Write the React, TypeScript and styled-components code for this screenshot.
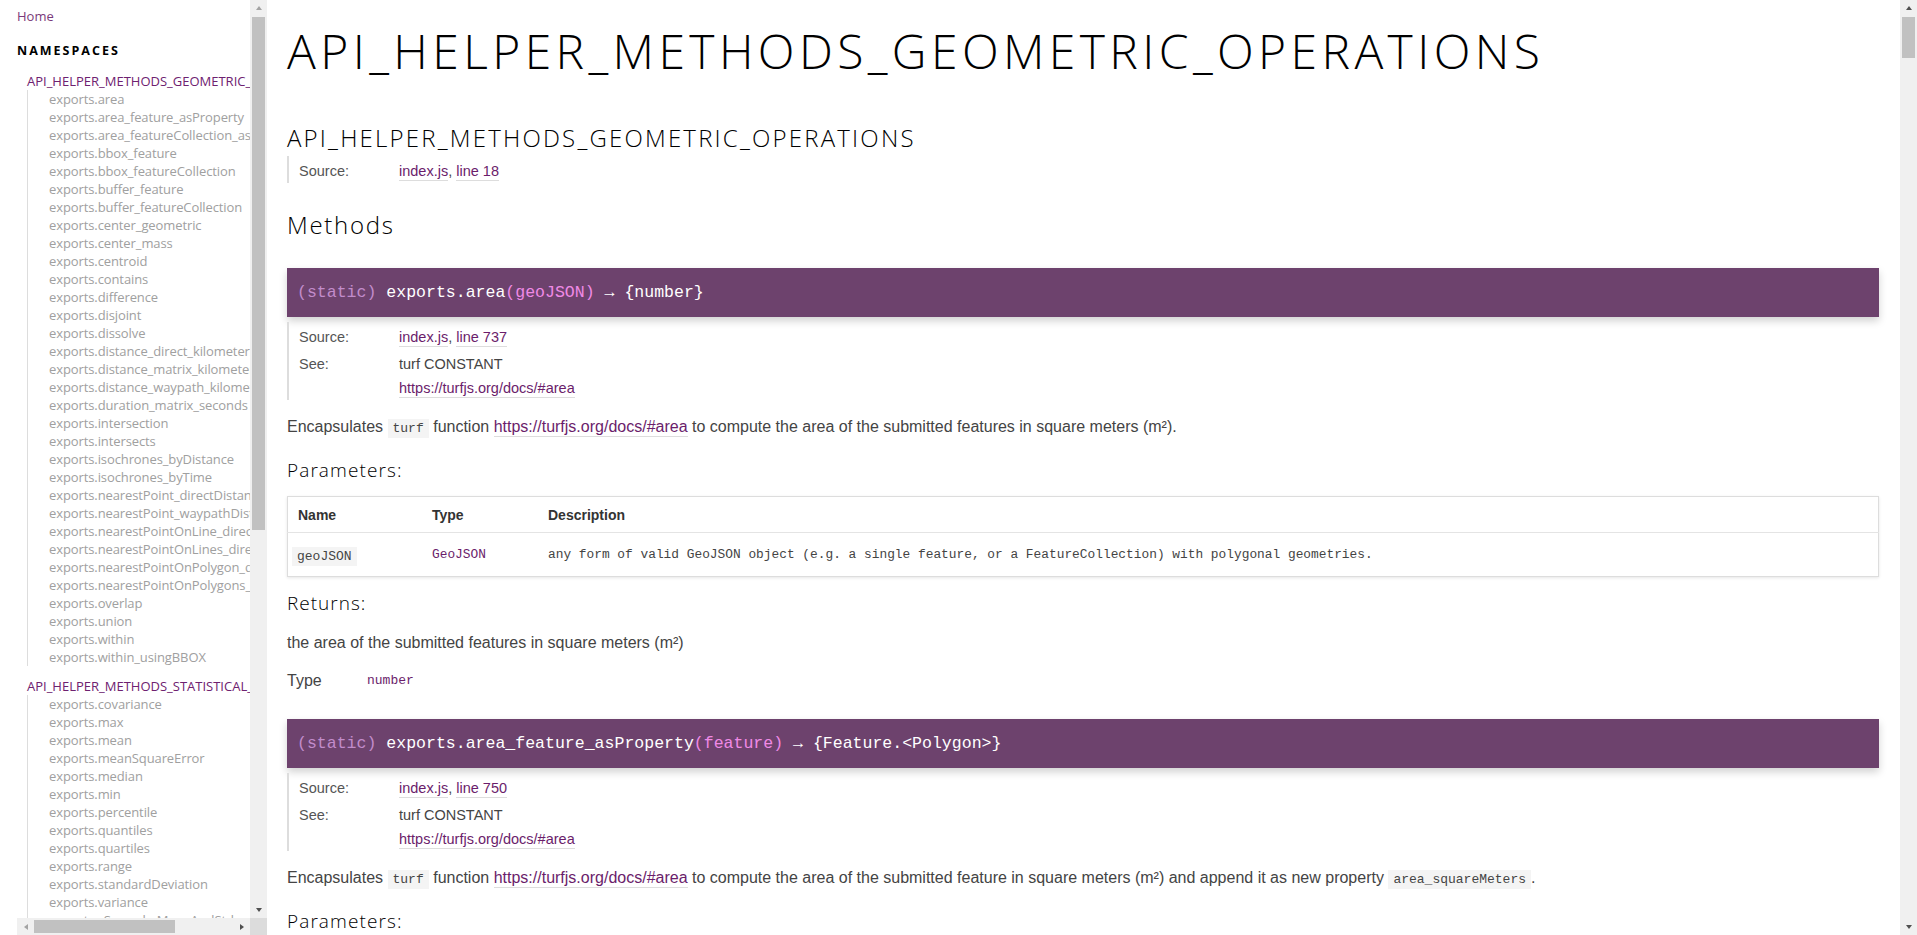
import * as React from 'react';
import styled, { createGlobalStyle, css } from 'styled-components';

const heading = `'Open Sans', 'Noto Sans', sans-serif`;
const body = `'Liberation Sans Narrow', 'Liberation Sans', Arial, sans-serif`;
const mono = `'Liberation Mono', 'DejaVu Sans Mono', monospace`;

const GlobalStyle = createGlobalStyle`
  html, body { margin: 0; padding: 0; background: #fff; }
  body { font-family: ${body}; color: #444; }
`;

/* page frame: left gutter, sidebar with its own scrollbars, content, page scrollbar */
const Shell = styled.div`
  display: flex;
  height: 100vh;
  overflow: hidden;
`;

const SideFrame = styled.div`
  flex: 0 0 250px;
  margin-left: 17px;
  display: grid;
  grid-template-columns: 233px 17px;
  grid-template-rows: 1fr 17px;
  height: 100vh;
`;

const NavViewport = styled.nav`
  overflow: hidden;
  font-family: ${heading};
  font-size: 13px;
`;

/* scrollbars */
const VBar = styled.div<{ $full?: boolean }>`
  display: flex;
  flex-direction: column;
  background: #f0f0f0;
  ${p => p.$full && css`flex: 0 0 17px; height: 100vh;`}
`;

const HBar = styled.div`
  display: flex;
  background: #f0f0f0;
`;

const Corner = styled.div`
  background: #dcdcdc;
`;

const ScrollButton = styled.div`
  flex: 0 0 17px;
  height: 17px;
  display: flex;
  align-items: center;
  justify-content: center;
`;

const Track = styled.div<{ $dir: 'v' | 'h' }>`
  flex: 1;
  display: flex;
  flex-direction: ${p => (p.$dir === 'v' ? 'column' : 'row')};
  padding: ${p => (p.$dir === 'v' ? '0 2px' : '2px 0')};
`;

const Thumb = styled.div<{ $size: number; $dir: 'v' | 'h' }>`
  background: #c1c1c1;
  ${p => (p.$dir === 'v' ? css`height: ${p.$size}px;` : css`width: ${p.$size}px;`)}
`;

const Arrow = styled.span<{ $dir: 'up' | 'down' | 'left' | 'right'; $dim?: boolean }>`
  width: 0;
  height: 0;
  ${p => {
    const c = p.$dim ? '#a3a3a3' : '#505050';
    switch (p.$dir) {
      case 'up':
        return css`border-left: 3.5px solid transparent; border-right: 3.5px solid transparent; border-bottom: 4px solid ${c}; margin-top: -2px;`;
      case 'down':
        return css`border-left: 3.5px solid transparent; border-right: 3.5px solid transparent; border-top: 4px solid ${c};`;
      case 'left':
        return css`border-top: 3.5px solid transparent; border-bottom: 3.5px solid transparent; border-right: 4px solid ${c};`;
      default:
        return css`border-top: 3.5px solid transparent; border-bottom: 3.5px solid transparent; border-left: 4px solid ${c};`;
    }
  }}
`;

/* sidebar */
const NavInner = styled.div`
  width: 330px;
  padding-top: 7px;
`;

const NavHome = styled.a`
  display: block;
  color: #7a3a7a;
  line-height: 18px;
  text-decoration: none;
`;

const NavTitle = styled.h3`
  margin: 17px 0 13px;
  font-size: 12.5px;
  font-weight: 700;
  letter-spacing: 2px;
  color: #000;
  line-height: 18px;
`;

const Namespace = styled.div`
  margin: 0 0 12px 10px;
`;

const NamespaceName = styled.a`
  display: block;
  color: #6e2170;
  line-height: 17px;
  white-space: nowrap;
`;

const MemberList = styled.ul`
  list-style: none;
  margin: 0;
  padding: 0 0 0 21px;
  border-left: 1px solid #ddd;
`;

const Member = styled.li`
  color: #a0a0a0;
  line-height: 18px;
  white-space: nowrap;
  letter-spacing: -0.1px;
`;

/* content */
const Main = styled.main`
  flex: 1;
  min-width: 0;
  height: 100vh;
  overflow: hidden;
  padding: 0 21px 0 20px;
`;

const PageTitle = styled.h1`
  margin: 22px 0 0;
  font-family: ${heading};
  font-weight: 300;
  font-size: 48px;
  line-height: 57.6px;
  color: #000;
  letter-spacing: 4.4px;
  white-space: nowrap;
`;

const SectionTitle = styled.h2`
  margin: 44px 0 0;
  font-family: ${heading};
  font-weight: 300;
  font-size: 24px;
  line-height: 28.8px;
  color: #000;
  letter-spacing: 2.2px;
`;

const SubTitle = styled.h3`
  margin: 28px 0 0;
  font-family: ${heading};
  font-weight: 300;
  font-size: 24px;
  line-height: 28.8px;
  color: #000;
  letter-spacing: 1.7px;
`;

const Details = styled.dl<{ $top: number }>`
  display: grid;
  grid-template-columns: 100px 1fr;
  row-gap: 3px;
  margin: ${p => p.$top}px 0 0;
  padding: 3px 0 0 10px;
  border-left: 2px solid #ddd;
  font-size: 14.5px;
  line-height: 24px;
  dt { color: #555; }
  dd { margin: 0; color: #444; }
`;

const Link = styled.a`
  color: #6b1d6b;
  text-decoration: none;
  border-bottom: 1px solid #ddd;
  padding-bottom: 1px;
`;

const MethodHeader = styled.h4<{ $top: number }>`
  margin: ${p => p.$top}px 0 0;
  padding: 0 10px;
  height: 49px;
  display: flex;
  align-items: center;
  background: #6d426d;
  color: #fff;
  font-family: ${mono};
  font-weight: 400;
  font-size: 16.55px;
  box-shadow: 0 4px 8px rgba(0, 0, 0, 0.18);
  white-space: pre;
`;

const Attr = styled.span`
  color: #c28ccb;
`;

const Params = styled.span`
  color: #f08ae6;
`;

const Paragraph = styled.p<{ $top: number }>`
  margin: ${p => p.$top}px 0 0;
  font-size: 16px;
  line-height: 24px;
  color: #444;
`;

const Code = styled.code`
  font-family: ${mono};
  font-size: 13px;
  background: #f4f4f4;
  padding: 2px 5px;
  color: #444;
`;

const Label = styled.h5<{ $top: number; $spacing: number }>`
  margin: ${p => p.$top}px 0 0;
  font-family: ${heading};
  font-weight: 300;
  font-size: 19px;
  line-height: 24px;
  color: #000;
  letter-spacing: ${p => p.$spacing}px;
`;

const Table = styled.table`
  margin-top: 14px;
  width: 100%;
  border-collapse: collapse;
  border: 1px solid #ddd;
  box-shadow: 0 1px 3px rgba(0, 0, 0, 0.1);
  th {
    text-align: left;
    font-size: 14px;
    font-weight: 700;
    color: #333;
    padding: 0 10px;
    height: 35px;
    border-bottom: 1px solid #e4e4e4;
  }
  td {
    padding: 0 10px;
    height: 43px;
    color: #444;
  }
`;

const NameHead = styled.th`
  && { width: 114px; }
`;

const TypeHead = styled.th`
  && { width: 96px; }
`;

const ParamName = styled.td`
  && { padding-left: 4px; }
`;

const ParamType = styled.td`
  font-family: ${mono};
  font-size: 12.85px;
  && { color: #6b1d6b; }
`;

const ParamDesc = styled.td`
  font-family: ${mono};
  font-size: 12.85px;
`;

const TypeRow = styled.div`
  display: flex;
  margin-top: 14px;
  font-size: 16px;
  line-height: 24px;
  color: #444;
`;

const TypeLabel = styled.span`
  width: 80px;
`;

const TypeValue = styled.span`
  font-family: ${mono};
  font-size: 13px;
  color: #6b1d6b;
`;

const geometric = [
  'exports.area', 'exports.area_feature_asProperty', 'exports.area_featureCollection_asProperty',
  'exports.bbox_feature', 'exports.bbox_featureCollection', 'exports.buffer_feature',
  'exports.buffer_featureCollection', 'exports.center_geometric', 'exports.center_mass',
  'exports.centroid', 'exports.contains', 'exports.difference', 'exports.disjoint', 'exports.dissolve',
  'exports.distance_direct_kilometers', 'exports.distance_matrix_kilometers',
  'exports.distance_waypath_kilometers', 'exports.duration_matrix_seconds', 'exports.intersection',
  'exports.intersects', 'exports.isochrones_byDistance', 'exports.isochrones_byTime',
  'exports.nearestPoint_directDistance', 'exports.nearestPoint_waypathDistance',
  'exports.nearestPointOnLine_directDistance', 'exports.nearestPointOnLines_directDistance',
  'exports.nearestPointOnPolygon_directDistance', 'exports.nearestPointOnPolygons_directDistance',
  'exports.overlap', 'exports.union', 'exports.within', 'exports.within_usingBBOX',
];

const statistical = [
  'exports.covariance', 'exports.max', 'exports.mean', 'exports.meanSquareError', 'exports.median',
  'exports.min', 'exports.percentile', 'exports.quantiles', 'exports.quartiles', 'exports.range',
  'exports.standardDeviation', 'exports.variance', 'exports.zScore_byMeanAndStdev',
];

const namespaces = [
  { name: 'API_HELPER_METHODS_GEOMETRIC_OPERATIONS', members: geometric },
  { name: 'API_HELPER_METHODS_STATISTICAL_OPERATIONS', members: statistical },
];

const TURF = 'https://turfjs.org/docs/#area';

function VerticalScrollbar({ thumb, dimUp, full }: { thumb: number; dimUp?: boolean; full?: boolean }) {
  return (
    <VBar $full={full}>
      <ScrollButton><Arrow $dir="up" $dim={dimUp} /></ScrollButton>
      <Track $dir="v"><Thumb $dir="v" $size={thumb} /></Track>
      <ScrollButton><Arrow $dir="down" /></ScrollButton>
    </VBar>
  );
}

export default function App() {
  return (
    <>
      <GlobalStyle />
      <Shell>
        <SideFrame>
          <NavViewport>
            <NavInner>
              <NavHome href="#">Home</NavHome>
              <NavTitle>NAMESPACES</NavTitle>
              {namespaces.map(ns => (
                <Namespace key={ns.name}>
                  <NamespaceName>{ns.name}</NamespaceName>
                  <MemberList>
                    {ns.members.map(m => <Member key={m}>{m}</Member>)}
                  </MemberList>
                </Namespace>
              ))}
            </NavInner>
          </NavViewport>
          <VerticalScrollbar thumb={513} dimUp />
          <HBar>
            <ScrollButton><Arrow $dir="left" $dim /></ScrollButton>
            <Track $dir="h"><Thumb $dir="h" $size={141} /></Track>
            <ScrollButton><Arrow $dir="right" /></ScrollButton>
          </HBar>
          <Corner />
        </SideFrame>

        <Main>
          <PageTitle>API_HELPER_METHODS_GEOMETRIC_OPERATIONS</PageTitle>
          <SectionTitle>API_HELPER_METHODS_GEOMETRIC_OPERATIONS</SectionTitle>
          <Details $top={4}>
            <dt>Source:</dt>
            <dd><Link>index.js</Link>, <Link>line 18</Link></dd>
          </Details>

          <SubTitle>Methods</SubTitle>

          <MethodHeader $top={28}>
            <Attr>(static) </Attr>exports.area<Params>(geoJSON)</Params> → {'{number}'}
          </MethodHeader>
          <Details $top={5}>
            <dt>Source:</dt>
            <dd><Link>index.js</Link>, <Link>line 737</Link></dd>
            <dt>See:</dt>
            <dd>turf CONSTANT<br /><Link>{TURF}</Link></dd>
          </Details>
          <Paragraph $top={15}>
            Encapsulates <Code>turf</Code> function <Link>{TURF}</Link> to compute the area of the submitted features in square meters (m²).
          </Paragraph>
          <Label $top={17} $spacing={1.1}>Parameters:</Label>
          <Table>
            <thead>
              <tr><NameHead>Name</NameHead><TypeHead>Type</TypeHead><th>Description</th></tr>
            </thead>
            <tbody>
              <tr>
                <ParamName><Code>geoJSON</Code></ParamName>
                <ParamType>GeoJSON</ParamType>
                <ParamDesc>any form of valid GeoJSON object (e.g. a single feature, or a FeatureCollection) with polygonal geometries.</ParamDesc>
              </tr>
            </tbody>
          </Table>
          <Label $top={14} $spacing={1}>Returns:</Label>
          <Paragraph $top={16}>the area of the submitted features in square meters (m²)</Paragraph>
          <TypeRow>
            <TypeLabel>Type</TypeLabel>
            <TypeValue>number</TypeValue>
          </TypeRow>

          <MethodHeader $top={26}>
            <Attr>(static) </Attr>exports.area_feature_asProperty<Params>(feature)</Params> → {'{Feature.<Polygon>}'}
          </MethodHeader>
          <Details $top={5}>
            <dt>Source:</dt>
            <dd><Link>index.js</Link>, <Link>line 750</Link></dd>
            <dt>See:</dt>
            <dd>turf CONSTANT<br /><Link>{TURF}</Link></dd>
          </Details>
          <Paragraph $top={15}>
            Encapsulates <Code>turf</Code> function <Link>{TURF}</Link> to compute the area of the submitted feature in square meters (m²) and append it as new property <Code>area_squareMeters</Code>.
          </Paragraph>
          <Label $top={17} $spacing={1.1}>Parameters:</Label>
        </Main>

        <VerticalScrollbar thumb={41} full />
      </Shell>
    </>
  );
}
